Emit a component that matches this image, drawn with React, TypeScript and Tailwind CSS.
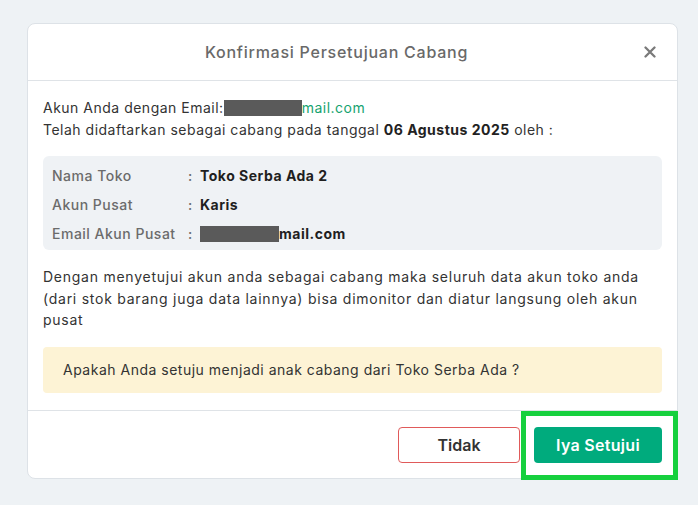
const font = { fontFamily: '"Inter", "Open Sans", sans-serif' };

function CloseIcon() {
  return (
    <svg width="12" height="12" viewBox="0 0 12 12" fill="none">
      <path d="M1.5 1.5L10.5 10.5M10.5 1.5L1.5 10.5" stroke="#7a7a7a" strokeWidth="2.3" strokeLinecap="round" />
    </svg>
  );
}

function Redacted({ w }: { w: number }) {
  return <span className="inline-block h-[16px] bg-[#5a5a5a] align-[-3px]" style={{ width: w }} />;
}

export default function App() {
  const rows = [
    { label: 'Nama Toko', value: <>Toko Serba Ada 2</> },
    { label: 'Akun Pusat', value: <>Karis</> },
    { label: 'Email Akun Pusat', value: <><Redacted w={79} />mail.com</> },
  ];

  return (
    <div className="relative h-[505px] w-[698px] bg-[#eef2f5] pl-[27px] pt-[23px]" style={font}>
      <div className="flex h-[456px] w-[651px] flex-col rounded-[8px] border border-[#dde2e7] bg-white">
        {/* Header */}
        <div className="relative flex h-[57px] shrink-0 items-center justify-center border-b border-[#dfe3e7] pr-[32px]">
          <span className="text-[16px] font-medium tracking-[0.75px] text-[#696969]">Konfirmasi Persetujuan Cabang</span>
          <button className="absolute right-[21px] top-[22px]">
            <CloseIcon />
          </button>
        </div>

        {/* Body */}
        <div className="flex-1 px-[15px] pt-[16px] text-[14px] tracking-[0.5px] text-[#333]">
          <div className="leading-[22px]">
            Akun Anda dengan Email:<Redacted w={78} /><span className="text-[#15a36f]">mail.com</span>
          </div>
          <div className="leading-[22px]">
            Telah didaftarkan sebagai cabang pada tanggal <span className="font-bold text-[#222]">06 Agustus 2025</span> oleh :
          </div>

          <div className="mt-[15px] rounded-[6px] bg-[#eff2f5] px-[9px] pb-[2px] pt-[5px]">
            {rows.map((r) => (
              <div key={r.label} className="flex h-[29px] items-center">
                <span className="w-[136px] font-medium text-[#6b6b6b]">{r.label}</span>
                <span className="w-[12px] font-medium text-[#6b6b6b]">:</span>
                <span className="font-bold text-[#1f1f1f]">{r.value}</span>
              </div>
            ))}
          </div>

          <p className="mt-[16px] leading-[21.5px] tracking-[0.75px]">
            Dengan menyetujui akun anda sebagai cabang maka seluruh data akun toko anda (dari stok barang juga data lainnya) bisa dimonitor dan diatur langsung oleh akun pusat
          </p>

          <div className="mt-[16px] flex h-[46px] items-center rounded-[4px] bg-[#fdf3d5] px-[20px]">
            Apakah Anda setuju menjadi anak cabang dari Toko Serba Ada ?
          </div>
        </div>

        {/* Footer */}
        <div className="flex h-[68px] shrink-0 items-center justify-end gap-[14px] border-t border-[#dfe3e7] px-[15px]">
          <button className="h-[36px] w-[122px] rounded-[4px] border border-[#e05a5a] bg-white text-[16px] font-semibold text-[#333]">
            Tidak
          </button>
          <button className="h-[36px] w-[128px] rounded-[4px] bg-[#00ab7d] text-[16px] font-semibold tracking-[0.3px] text-white">
            Iya Setujui
          </button>
        </div>
      </div>

      {/* Highlight annotation */}
      <div className="absolute left-[521px] top-[411px] h-[69px] w-[157px] border-[5px] border-[#16d03e]" />
    </div>
  );
}
